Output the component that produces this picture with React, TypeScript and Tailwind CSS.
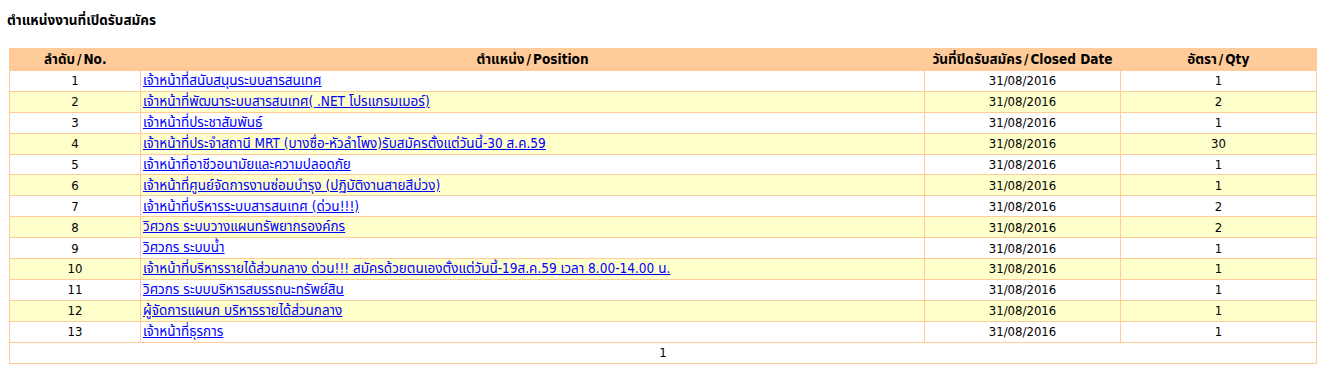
import React from "react";

const rows: [string, string, string, string][] = [
  ["1", "เจ้าหน้าที่สนับสนุนระบบสารสนเทศ", "31/08/2016", "1"],
  ["2", "เจ้าหน้าที่พัฒนาระบบสารสนเทศ( .NET โปรแกรมเมอร์)", "31/08/2016", "2"],
  ["3", "เจ้าหน้าที่ประชาสัมพันธ์", "31/08/2016", "1"],
  ["4", "เจ้าหน้าที่ประจำสถานี MRT (บางซื่อ-หัวลำโพง)รับสมัครตั้งแต่วันนี้-30 ส.ค.59", "31/08/2016", "30"],
  ["5", "เจ้าหน้าที่อาชีวอนามัยและความปลอดภัย", "31/08/2016", "1"],
  ["6", "เจ้าหน้าที่ศูนย์จัดการงานซ่อมบำรุง (ปฏิบัติงานสายสีม่วง)", "31/08/2016", "1"],
  ["7", "เจ้าหน้าที่บริหารระบบสารสนเทศ (ด่วน!!!)", "31/08/2016", "2"],
  ["8", "วิศวกร ระบบวางแผนทรัพยากรองค์กร", "31/08/2016", "2"],
  ["9", "วิศวกร ระบบน้ำ", "31/08/2016", "1"],
  ["10", "เจ้าหน้าที่บริหารรายได้ส่วนกลาง ด่วน!!! สมัครด้วยตนเองตั้งแต่วันนี้-19ส.ค.59 เวลา 8.00-14.00 น.", "31/08/2016", "1"],
  ["11", "วิศวกร ระบบบริหารสมรรถนะทรัพย์สิน", "31/08/2016", "1"],
  ["12", "ผู้จัดการแผนก บริหารรายได้ส่วนกลาง", "31/08/2016", "1"],
  ["13", "เจ้าหน้าที่ธุรการ", "31/08/2016", "1"],
];

const font = { fontFamily: "Tahoma, 'DejaVu Sans Condensed', 'Noto Sans', 'Noto Sans Thai', sans-serif" };

function Head({ th, en }: { th: string; en: string }) {
  return (
    <th className="font-bold text-center p-0 text-[13.5px]">
      {th}
      <span className="px-[2px]">/</span>
      {en}
    </th>
  );
}

export default function App() {
  return (
    <div className="bg-white text-black text-[13px] leading-none" style={font}>
      <div className="px-[7px] pt-[14px] h-[48px]">
        <div className="font-bold text-[13.5px] leading-[13px]">ตำแหน่งงานที่เปิดรับสมัคร</div>
      </div>
      <table className="ml-[9px] w-[1307px] border-collapse border border-[#FFCC99] table-fixed">
        <colgroup>
          <col className="w-[131px]" />
          <col className="w-[784px]" />
          <col className="w-[196px]" />
          <col className="w-[196px]" />
        </colgroup>
        <thead>
          <tr className="bg-[#FFCC99] h-[22px]">
            <Head th="ลำดับ" en="No." />
            <Head th="ตำแหน่ง" en="Position" />
            <Head th="วันที่ปิดรับสมัคร" en="Closed Date" />
            <Head th="อัตรา" en="Qty" />
          </tr>
        </thead>
        <tbody>
          {rows.map((r, i) => (
            <tr key={r[0]} className={`h-[20.9px] ${i % 2 === 1 ? "bg-[#FFFFCC]" : "bg-white"}`}>
              <td className="border border-[#FFCC99] text-center p-0">{r[0]}</td>
              <td className="border border-[#FFCC99] text-left pl-[2px] p-0">
                <a href="#" className="text-[#0000FF] underline text-[13.5px]">{r[1]}</a>
              </td>
              <td className="border border-[#FFCC99] text-center p-0">{r[2]}</td>
              <td className="border border-[#FFCC99] text-center p-0">{r[3]}</td>
            </tr>
          ))}
          <tr className="h-[21px] bg-white">
            <td colSpan={4} className="border border-[#FFCC99] text-center p-0">1</td>
          </tr>
        </tbody>
      </table>
    </div>
  );
}
